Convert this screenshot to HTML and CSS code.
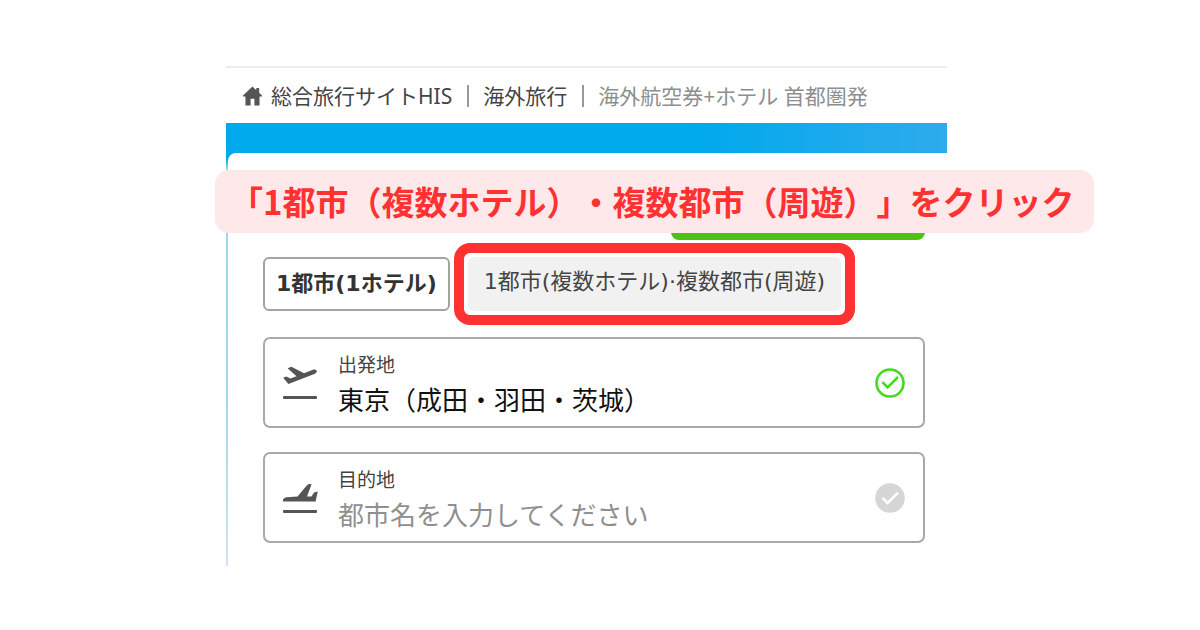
FILE: index.html
```html
<!DOCTYPE html>
<html lang="ja">
<head>
    <meta charset="UTF-8">
    <meta name="viewport" content="width=device-width, initial-scale=1.0">
    <title>海外航空券+ホテル 首都圏発</title>
    <link rel="stylesheet" href="styles.css">
</head>
<body>
    <div class="page">
        <nav class="breadcrumb">
            <svg class="home-icon" viewBox="0 0 20 20" aria-hidden="true">
                <path d="M10 0L0 9.6V10.6H2.6V20H8V13H12V20H17.4V10.6H20V9.6L17 6.7V1.5H14V3.9Z" fill="#555"/>
            </svg>
            <a href="#">総合旅行サイトHIS</a>
            <a href="#">海外旅行</a>
            <span>海外航空券+ホテル 首都圏発</span>
        </nav>
        <main class="hero">
            <p class="callout">「1都市（複数ホテル）・複数都市（周遊）」をクリック</p>
            <form class="panel">
                <div class="plan-bar"></div>
                <div class="tabs">
                    <button type="button" class="tab active">1都市(1ホテル)</button>
                    <div class="highlight">
                        <button type="button" class="tab">1都市(複数ホテル)·複数都市(周遊)</button>
                    </div>
                </div>
                <div class="field">
                    <svg class="plane-icon" viewBox="0 0 36 36" aria-hidden="true">
                        <path d="M1.2 12.8L4.2 11.6L8.5 13.6L14.5 11.2L5.6 3.2L9.4 1.7L22 8.2L31.5 4.6Q34.3 4 34.9 6Q34.9 7.8 33 8.7L6.4 18.9Z" fill="#555"/>
                        <rect x="1" y="31" width="34" height="3" rx="1" fill="#555"/>
                    </svg>
                    <div class="field-text">
                        <label for="departure">出発地</label>
                        <input type="text" id="departure" value="東京（成田・羽田・茨城）">
                    </div>
                    <svg class="check-icon" viewBox="0 0 30 30" aria-hidden="true">
                        <circle cx="15" cy="15" r="13.5" fill="none" stroke="#43db1c" stroke-width="2.6"/>
                        <path d="M7.5 14.2L12.6 19.4L23 9" fill="none" stroke="#43db1c" stroke-width="2.6"/>
                    </svg>
                </div>
                <div class="field">
                    <svg class="plane-icon" viewBox="0 0 36 36" aria-hidden="true">
                        <path d="M0.8 21.4Q1 17.6 4.5 17.2L15.5 16.6L25 5.2Q26.5 3.6 29.6 4.2L25 16.4H29.5L32 12.4L35.8 11.6L33.6 21.4Z" fill="#555"/>
                        <rect x="1" y="30" width="34" height="3" rx="1" fill="#555"/>
                    </svg>
                    <div class="field-text">
                        <label for="destination">目的地</label>
                        <input type="text" id="destination" placeholder="都市名を入力してください">
                    </div>
                    <svg class="check-icon" viewBox="0 0 30 30" aria-hidden="true">
                        <circle cx="15" cy="15" r="14.8" fill="#d6d6d6"/>
                        <path d="M7.5 14.8L12.6 20L23 9.6" fill="none" stroke="#fff" stroke-width="2.6"/>
                    </svg>
                </div>
            </form>
        </main>
    </div>
</body>
</html>
```
FILE: styles.css
```css
* {
    box-sizing: border-box;
}
body {
    font-family: "Noto Sans", "Noto Sans CJK JP", sans-serif;
    margin: 0;
    background: #fff;
    color: #444;
}
.page {
    padding: 66px 253px 0 226px;
}
.breadcrumb {
    display: flex;
    align-items: center;
    height: 57px;
    padding-left: 17px;
    border-top: 2px solid #ececec;
    font-size: 21px;
    line-height: 22px;
    white-space: nowrap;
}
.home-icon {
    width: 19px;
    height: 20px;
    margin-right: 9px;
}
.breadcrumb a {
    color: #444;
    text-decoration: none;
    padding-right: 15px;
    margin-right: 14px;
    border-right: 2px solid #999;
}
.breadcrumb span {
    color: #8e8e8e;
}
.hero {
    position: relative;
    padding: 30px 0 0 2px;
    background: linear-gradient(90deg, #00a9ec 65%, #2eabec) top / 100% 30px no-repeat,
        linear-gradient(#00a9ec 36px, #a0d6e8 46px, #a5d5ea 60%, #cfe3f5);
}
.panel {
    padding: 25px 22px 23px 35px;
    background: #fff;
    border-top-left-radius: 8px;
}
.callout {
    position: absolute;
    top: 47px;
    left: -11px;
    margin: 0;
    padding: 0 20px 0 15px;
    border-radius: 14px;
    background: #ffe8e9;
    color: #ff3131;
    font-family: "Noto Sans CJK JP", sans-serif;
    font-size: 33px;
    font-weight: bold;
    line-height: 63px;
    white-space: nowrap;
    text-spacing-trim: space-all;
}
.plan-bar {
    width: 254px;
    height: 62px;
    margin-left: auto;
    border-radius: 8px;
    background: #4bc40f;
}
.tabs {
    display: flex;
    gap: 18px;
    margin: 17px 0 26px;
}
.tab {
    height: 54px;
    padding: 0 16px 4px;
    border: 0;
    border-radius: 6px;
    background: #f1f1f1;
    color: #444;
    font-family: "DejaVu Sans", "Noto Sans CJK JP", sans-serif;
    font-size: 22px;
    line-height: 30px;
    white-space: nowrap;
}
.tab.active {
    padding: 0 11px;
    border: 2px solid #a3a3a3;
    background: #fff;
    color: #333;
    font-weight: bold;
}
.highlight {
    position: relative;
}
.highlight::after {
    content: "";
    position: absolute;
    inset: -14px;
    border: 10px solid #ff3131;
    border-radius: 16px;
    pointer-events: none;
}
.field {
    display: flex;
    align-items: center;
    gap: 20px;
    height: 91px;
    padding: 0 18px 0 17px;
    border: 2px solid #a9a9a9;
    border-radius: 7px;
}
.field + .field {
    margin-top: 24px;
}
.plane-icon {
    flex: none;
    width: 36px;
    height: 36px;
}
.field-text {
    flex: 1;
    min-width: 0;
    padding-top: 3px;
}
.field-text label {
    display: block;
    font-size: 19px;
    line-height: 28px;
}
.field-text input {
    display: block;
    width: 100%;
    height: 38px;
    padding: 0;
    border: 0;
    outline: 0;
    background: none;
    color: #111;
    font-family: "Noto Sans CJK JP", sans-serif;
    font-size: 26px;
    text-spacing-trim: space-all;
}
.field-text input::placeholder {
    color: #8f8f8f;
}
.check-icon {
    flex: none;
    width: 30px;
    height: 30px;
}
```
